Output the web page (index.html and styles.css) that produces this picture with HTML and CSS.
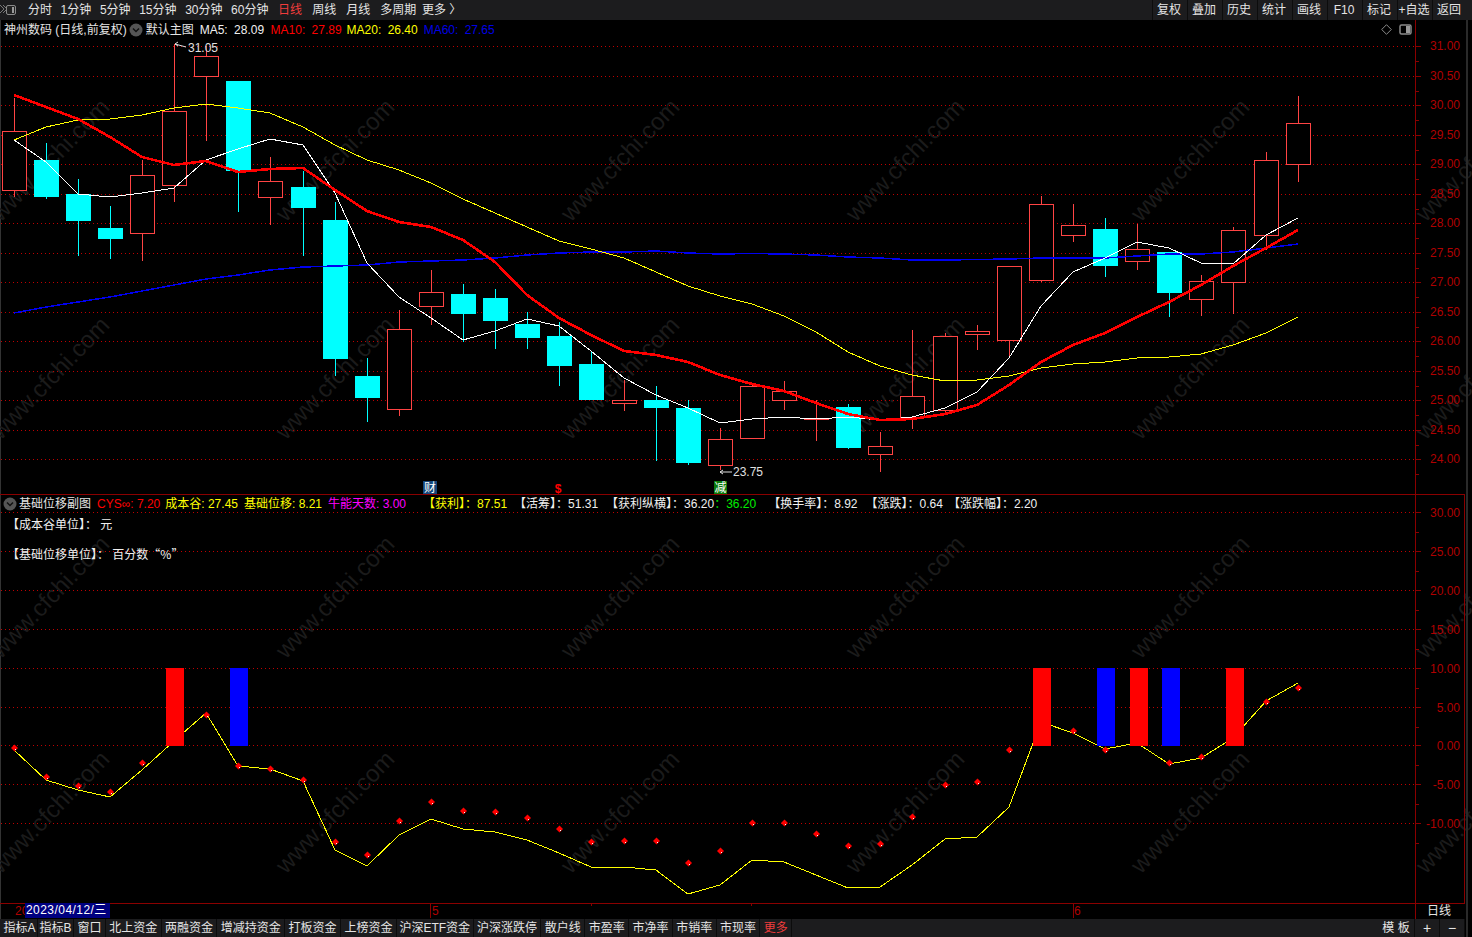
FILE: index.html
```html
<!DOCTYPE html>
<html lang="zh-CN">
<head>
<meta charset="utf-8">
<title>神州数码 日线</title>
<link rel="stylesheet" href="styles.css">
</head>
<body>
<div class="app">
  <header class="topbar">
    <svg class="win-icon" width="17" height="12" viewBox="0 0 17 12"><path class="win-hatch" d="M0 1l4 4-4 4M3 1l4 4-4 4"/><rect class="win-box" x="6.5" y="1.5" width="9" height="9" rx="1.5"/><rect class="win-fill" x="12" y="3" width="2" height="6"/></svg>
    <nav class="periods">
      <span>分时</span><span>1分钟</span><span>5分钟</span><span>15分钟</span><span>30分钟</span><span>60分钟</span><span class="on">日线</span><span class="wk">周线</span><span class="wk">月线</span><span class="wk">多周期</span><span class="more">更多 〉</span>
    </nav>
    <nav class="tools">
      <span>复权</span><span>叠加</span><span>历史</span><span>统计</span><span>画线</span><span>F10</span><span>标记</span><span>+自选</span><span>返回</span>
    </nav>
  </header>

  <section class="chart">
    <div class="pane pane-main" id="main">
      <div class="legend legend-main">
        <span class="title">神州数码 (日线,前复权)</span>
        <svg class="chev" width="14" height="14" viewBox="0 0 14 14"><circle cx="7" cy="7" r="6.5"/><path d="M4 5.5l3 3 3-3"/></svg>
        <span class="tpl">默认主图</span>
        <span class="c-white ma5-val">MA5: 28.09</span>
        <span class="c-red">MA10: 27.89</span>
        <span class="c-yellow ma20-val">MA20: 26.40</span>
        <span class="c-blue">MA60: 27.65</span>
      </div>
      <div class="pane-tools">
        <svg width="11" height="11" viewBox="0 0 11 11"><path class="diamond" d="M5.5.7l4.8 4.8-4.8 4.8L.7 5.500z"/></svg>
        <svg width="13" height="11" viewBox="0 0 13 11"><rect class="panel-box" x="1" y="1" width="11" height="9" rx="1.500"/><rect class="panel-fill" x="7" y="2" width="4" height="7"/></svg>
      </div>
    </div>
    <div class="pane pane-sub" id="sub">
      <div class="legend legend-sub">
        <svg class="chev" width="14" height="14" viewBox="0 0 14 14"><circle cx="7" cy="7" r="6.500"/><path d="M4 5.500l3 3 3-3"/></svg>
        <span class="sub-title">基础位移副图</span>
        <span class="c-red">CYS∞: 7.20</span>
        <span class="c-yellow">成本谷: 27.45</span>
        <span class="c-yellow">基础位移: 8.21</span>
        <span class="c-magenta">牛能天数: 3.00</span>
        <span class="c-yellow wide">【获利】：87.51</span>
        <span class="c-white">【活筹】：51.31</span>
        <span class="c-white">【获利纵横】：36.20</span>
        <span class="c-green">：36.20</span>
        <span class="c-white wide">【换手率】：8.92</span>
        <span class="c-white">【涨跌】：0.64</span>
        <span class="c-white tail">【涨跌幅】：2.20</span>
      </div>
      <div class="notes">
        <p>【成本谷单位】： 元</p>
        <p>【基础位移单位】： 百分数<span class="q">“%”</span></p>
      </div>
    </div>
    <div class="pane pane-x" id="xaxis">
      <span class="date-tag">2023/04/12/三</span>
      <span class="x-period">日线</span>
    </div>
    <div class="edge"></div>
  </section>

  <footer class="bottombar">
    <nav class="tabs">
      <span class="tight">指标A</span><span class="tight">指标B</span><span>窗口</span><span>北上资金</span><span>两融资金</span><span>增减持资金</span><span>打板资金</span><span>上榜资金</span><span class="etf">沪深ETF资金</span><span>沪深涨跌停</span><span>散户线</span><span>市盈率</span><span>市净率</span><span>市销率</span><span>市现率</span><span class="on">更多</span>
    </nav>
    <nav class="tabs tabs-right">
      <span class="spaced">模 板</span><span class="zoom">+</span><span class="zoom">−</span>
    </nav>
  </footer>
</div>
<script src="chart.js"></script>
</body>
</html>
```

FILE: styles.css
```css
* { box-sizing: border-box; }
html, body { margin: 0; height: 100%; background: #000; overflow: hidden; }
body { font: 12px/1 "Liberation Sans", "Noto Sans CJK SC", sans-serif; color: #e4e4e4; }

.app { display: flex; flex-direction: column; width: 1472px; height: 937px; }

/* top bar */
.topbar { display: flex; align-items: center; height: 20px; background: #1c1c1e; flex: none; }
.win-icon { flex: none; margin-right: 11px; }
.win-hatch { fill: none; stroke: #777; stroke-width: 1; }
.win-box { fill: #222; stroke: #8a8a8a; }
.win-fill { fill: #9a9a9a; }
.periods { display: flex; gap: 8.6px; }
.periods .on { color: #f03c3c; margin-left: 1px; }
.periods .wk { margin-left: 1.5px; }
.periods .more { margin-left: -3px; }
.tools { display: flex; margin-left: auto; margin-right: 6.5px; height: 20px; gap: 2px; }
.tools span { display: flex; align-items: center; justify-content: center; width: 33px; background: #1c1c1e; box-shadow: -1px 0 0 #0c0c0c; }

/* chart */
.chart { position: relative; flex: none; height: 899px; background: #000; border-left: 1px solid #333; }
.pane { position: relative; }
.pane svg.plot { position: absolute; left: -1px; top: 0; display: block; }
.pane-main { height: 474px; }
.pane-sub { height: 409px; }
.pane-x { height: 16px; }

.legend { position: absolute; left: 3px; top: 3px; display: flex; align-items: center; white-space: nowrap; height: 14px; z-index: 1; }
.legend-main { word-spacing: 3px; }
.legend-main > span { margin-right: 5px; }
.legend-main .title { margin-right: 2px; word-spacing: 0; }
.legend-main .tpl { margin: 0 6px 0 3px; }
.legend-main .ma5-val { margin-right: 6.5px; }
.legend-main .ma20-val { margin-right: 6px; }
.legend-sub { left: 2px; top: 3px; }
.legend-sub > span { margin-right: 5px; }
.legend-sub .sub-title { margin: 0 6px 0 2px; }
.legend-sub .c-yellow { margin-right: 6px; }
.legend-sub .c-yellow.wide { margin-left: 12px; margin-right: 7px; }
.legend-sub .c-white { margin-right: 8px; }
.legend-sub .c-green { margin-right: 6px; margin-left: -8px; }
.legend-sub .c-white.wide { margin-left: 6px; }
.legend-sub .tail { margin-left: -3px; }
.chev circle { fill: #555; }
.chev path { fill: none; stroke: #111; stroke-width: 1.500; }
.c-white { color: #f0f0f0; }
.c-red { color: #f00; }
.c-yellow { color: #ff0; }
.c-blue { color: #0000e6; }
.c-magenta { color: #f0f; }
.c-green { color: #0e0; }

.pane-tools { position: absolute; right: 60px; top: 4px; display: flex; align-items: center; gap: 7px; }
.diamond { fill: none; stroke: #8a8a8a; }
.panel-box { fill: none; stroke: #8a8a8a; stroke-width: 1.500; }
.panel-fill { fill: #9a9a9a; }

.notes { position: absolute; left: 6px; top: 25px; z-index: 1; color: #f0f0f0; }
.notes p { margin: 0 0 17px; height: 12px; }
.notes .q { font-family: "Noto Sans CJK SC", sans-serif; }

.date-tag { position: absolute; left: 24px; top: 0; height: 15px; width: 85px; line-height: 15px; padding-left: 1px; background: #000080; color: #fff; white-space: nowrap; letter-spacing: .45px; }
.x-period { position: absolute; left: 1426px; top: 2px; }
.edge { position: absolute; left: 1465px; top: 0; bottom: -18px; width: 2px; background: #2a2a2a; }

/* SVG plot */
.grid { stroke: #c00000; stroke-dasharray: 1 3; stroke-width: 1; shape-rendering: crispEdges; }
.axis { stroke: #8a0000; stroke-width: 1; shape-rendering: crispEdges; fill: none; }
.tick-label { fill: #b00000; font-size: 12px; text-anchor: end; }
.wm { fill: #1b1b1b; font-size: 24px; text-anchor: middle; }
.wick-up { stroke: #ff4444; shape-rendering: crispEdges; }
.wick-dn { stroke: #00ffff; shape-rendering: crispEdges; }
.body-up { fill: #000; stroke: #ff4444; shape-rendering: crispEdges; }
.body-dn { fill: #00ffff; shape-rendering: crispEdges; }
.ma { fill: none; stroke-linejoin: round; shape-rendering: crispEdges; }
.ma5 { stroke: #fff; stroke-width: 1; }
.ma10 { stroke: #f00; stroke-width: 2.600; }
.ma20 { stroke: #ff0; stroke-width: 1; }
.ma60 { stroke: #0000f0; stroke-width: 1.500; }
.base { fill: none; stroke: #ff0; stroke-width: 1; stroke-linejoin: round; shape-rendering: crispEdges; }
.bar-r { fill: #f00; shape-rendering: crispEdges; }
.bar-b { fill: #00f; shape-rendering: crispEdges; }
.dot { fill: #f00; }
.dot-c { fill: #fff; shape-rendering: crispEdges; }
.note { fill: #e0e0e0; font-size: 12px; }
.note-line { fill: none; stroke: #e0e0e0; stroke-width: 1; }
.sig-box-b { fill: #14467a; shape-rendering: crispEdges; }
.sig-box-g { fill: #0a7a0a; shape-rendering: crispEdges; }
.sig { fill: #fff; font-size: 12px; text-anchor: middle; }
.sig-r { fill: #f00; font-size: 12px; text-anchor: middle; font-weight: bold; }
.x-label { fill: #b00000; font-size: 12px; }

/* bottom bar */
.bottombar { display: flex; justify-content: space-between; flex: none; height: 18px; width: 1464px; padding-left: 2px; background: #1c1c1e; }
.tabs { display: flex; gap: 1px; }
.tabs span { display: flex; align-items: center; justify-content: center; padding: 0 3.400px; background: #1c1c1e; box-shadow: 1px 0 0 #0c0c0c; white-space: nowrap; }
.tabs .tight { padding: 0 1.500px; }
.tabs .etf { padding: 0 2.600px; }
.tabs .on { color: #f03c3c; }
.tabs .spaced { padding: 0 3px; width: 36px; }
.tabs .zoom { width: 24px; font-size: 14px; padding: 0; }
```

FILE: chart.js
```js
(function () {
  var NS = 'http://www.w3.org/2000/svg';
  var X = [];
  for (var n = 0; n < 41; n++) X.push(Math.round(13.6 + n * 32.1));

  // top, bottom, high, low (page pixels); last = red (hollow) candle
  var C = [
    [131,190,98,197,1],[160,196,143,199,0],[194,220,179,256,0],[228,238,206,259,0],
    [175,233,160,261,1],[111,185,44,202,1],[56,76,46,141,1],[81,170,81,212,0],
    [181,197,157,225,1],[187,207,171,256,0],[220,358,202,376,0],[376,397,358,422,0],
    [329,409,310,416,1],[292,306,270,325,1],[294,313,284,342,0],[298,320,289,349,0],
    [324,337,312,349,0],[336,365,322,386,0],[364,399,352,400,0],[400,403,380,411,1],
    [400,407,386,461,0],[408,462,400,465,0],[439,465,428,470,1],[386,438,384,439,1],
    [391,400,381,410,1],[418,419,400,441,1],[407,447,404,449,0],[446,454,432,472,1],
    [396,417,330,429,1],[336,410,333,415,1],[331,334,325,350,1],[266,340,266,358,1],
    [204,280,196,282,1],[225,235,204,242,1],[229,265,218,277,0],[249,261,224,270,1],
    [252,292,252,317,0],[281,299,275,316,1],[230,282,227,314,1],[160,235,152,250,1],
    [123,164,96,182,1]
  ];
  var MA5 = [140,162,194,197,193,188,160,149,139,145,193,263,297,318,340,331,319,326,351,378,395,408,423,419,417,419,417,420,417,408,392,358,306,272,258,242,248,263,264,235,218];
  var MA10 = [95,107,119,137,157,165,161,172,169,168,190,211,222,227,240,262,295,318,335,351,355,362,375,384,391,403,414,420,419,414,405,385,362,345,333,317,302,285,266,248,230];
  var MA20 = [140,127,120,119,115,108,104,108,113,127,145,160,170,183,199,213,227,241,249,258,272,286,296,304,316,332,352,366,375,381,380,376,368,364,362,358,357,354,345,333,317];
  var MA60 = [313,307,302,297,291,285,279,275,270,267,266,265,262,261,260,258,255,253,252,252,251,253,254,253.500,254,255,257,258,260,260,259.500,259,258,258,258,256,254,254,252,248,244];
  var BASE = [750,780,790,797,770,741,713,766,769,781,850,866,835,819,829,832,840,853,867,867,870,894,885,860,862,875,888,887,865,839,837,807,722,733,749,743,764,758,738,701,683];
  var DOTS = [748,777,786,792,763,null,715,766,769,780,842,855,821,802,811,812,818,829,842,841,841,863,851,823,823,834,846,844,817,785,782,750,null,731,750,null,763,757,null,702,688];

  function el(name, attrs, text) {
    var e = document.createElementNS(NS, name);
    for (var k in attrs) e.setAttribute(k, attrs[k]);
    if (text !== undefined) e.textContent = text;
    return e;
  }
  function plot(host, y0, h) {
    var s = el('svg', { 'class': 'plot', width: 1472, height: h, viewBox: '0 ' + y0 + ' 1472 ' + h });
    host.insertBefore(s, host.firstChild);
    return s;
  }
  function hline(s, y, cls) { s.appendChild(el('line', { 'class': cls, x1: 1, x2: 1415, y1: y + 0.5, y2: y + 0.5 })); }
  function line(s, x1, y1, x2, y2, cls) { s.appendChild(el('line', { 'class': cls, x1: x1, y1: y1, x2: x2, y2: y2 })); }
  function watermarks(s, ys) {
    ys.forEach(function (y) {
      [50, 335, 620, 905, 1190, 1475].forEach(function (x) {
        s.appendChild(el('text', { 'class': 'wm', x: x, y: y + 8, transform: 'rotate(-46 ' + x + ' ' + y + ')' }, 'www.cfchi.com'));
      });
    });
  }
  function poly(s, ys, cls) {
    var pts = ys.map(function (y, i) { return X[i] + ',' + y; }).join(' ');
    s.appendChild(el('polyline', { 'class': cls, points: pts }));
  }
  function note(s, y, from, to, label, tx, slant, dy) {
    s.appendChild(el('path', { 'class': 'note-line', d: 'M' + from + ' ' + y + 'L' + to + ' ' + (y + slant) + 'M' + (from + 3) + ' ' + (y - 2) + 'L' + from + ' ' + y + 'L' + (from + 3) + ' ' + (y + 2) }));
    s.appendChild(el('text', { 'class': 'note', x: tx, y: y + dy }, label));
  }

  /* main pane */
  var m = plot(document.getElementById('main'), 20, 474);
  watermarks(m, [160, 378]);
  var i, y, v;
  for (i = 0; i <= 14; i++) {
    v = 31 - i * 0.5;
    y = Math.round(46 + i * 29.5);
    hline(m, y, 'grid');
    m.appendChild(el('text', { 'class': 'tick-label', x: 1460, y: y + 4 }, v.toFixed(2)));
    line(m, 1415, y + 0.5, 1421, y + 0.5, 'axis');
    line(m, 1415, y + 15.5, 1419, y + 15.5, 'axis');
  }
  line(m, 1415.5, 20, 1415.5, 494, 'axis');
  C.forEach(function (c, k) {
    var x = X[k] + 0.5;
    var up = c[4];
    if (c[2] < c[0]) line(m, x, c[2], x, c[0], up ? 'wick-up' : 'wick-dn');
    if (c[3] > c[1]) line(m, x, c[1], x, c[3], up ? 'wick-up' : 'wick-dn');
    if (up) m.appendChild(el('rect', { 'class': 'body-up', x: x - 12, y: c[0] + 0.5, width: 24, height: c[1] - c[0] }));
    else m.appendChild(el('rect', { 'class': 'body-dn', x: x - 12.5, y: c[0], width: 25, height: c[1] - c[0] + 1 }));
  });
  poly(m, MA60, 'ma ma60');
  poly(m, MA20, 'ma ma20');
  poly(m, MA5, 'ma ma5');
  poly(m, MA10, 'ma ma10');
  note(m, 44, 175, 186, '31.05', 188, 3, 8);
  note(m, 472, 720, 732, '23.75', 733, 0, 4);
  m.appendChild(el('rect', { 'class': 'sig-box-b', x: 423, y: 481, width: 14, height: 13 }));
  m.appendChild(el('text', { 'class': 'sig', x: 430, y: 492 }, '财'));
  m.appendChild(el('text', { 'class': 'sig-r', x: 558, y: 493 }, '$'));
  m.appendChild(el('rect', { 'class': 'sig-box-g', x: 714, y: 481, width: 13, height: 13 }));
  m.appendChild(el('text', { 'class': 'sig', x: 720.500, y: 492 }, '减'));

  /* sub pane */
  var s = plot(document.getElementById('sub'), 494, 409);
  watermarks(s, [597, 812]);
  for (i = 0; i <= 8; i++) {
    v = 30 - i * 5;
    y = Math.round(512 + i * 38.9);
    hline(s, y, 'grid');
    s.appendChild(el('text', { 'class': 'tick-label', x: 1460, y: y + 5 }, v.toFixed(2)));
    line(s, 1415, y + 0.5, 1421, y + 0.5, 'axis');
    line(s, 1415, y + 20, 1419, y + 20, 'axis');
  }
  poly(s, BASE, 'base');
  [[166, 'r'], [230, 'b'], [1033, 'r'], [1097, 'b'], [1130, 'r'], [1162, 'b'], [1226, 'r']].forEach(function (b) {
    s.appendChild(el('rect', { 'class': 'bar-' + b[1], x: b[0], y: 668, width: 17.500, height: 78 }));
  });
  DOTS.forEach(function (d, k) {
    if (d === null) return;
    var x = X[k] + 0.5;
    s.appendChild(el('path', { 'class': 'dot', d: 'M' + x + ' ' + (d - 3.500) + 'l3.500 3.500-3.500 3.500-3.500-3.500z' }));
    s.appendChild(el('rect', { 'class': 'dot-c', x: x, y: d + 1, width: 1, height: 1 }));
  });
  line(s, 0, 494.5, 1465, 494.5, 'axis');
  line(s, 1415.5, 494, 1415.5, 903, 'axis');
  line(s, 1464.5, 494, 1464.5, 903, 'axis');

  /* time axis */
  var a = plot(document.getElementById('xaxis'), 903, 16);
  line(a, 0, 903.5, 1465, 903.5, 'axis');
  line(a, 1415.5, 903, 1415.5, 919, 'axis');
  [[430, 15], [1073, 15], [591, 3], [751, 3]].forEach(function (t) {
    line(a, t[0] + 0.5, 903, t[0] + 0.5, 903 + t[1], 'axis');
  });
  a.appendChild(el('text', { 'class': 'x-label', x: 15, y: 915 }, '20'));
  a.appendChild(el('text', { 'class': 'x-label', x: 432, y: 915 }, '5'));
  a.appendChild(el('text', { 'class': 'x-label', x: 1074, y: 915 }, '6'));
})();
```
